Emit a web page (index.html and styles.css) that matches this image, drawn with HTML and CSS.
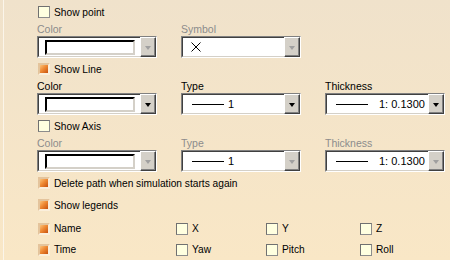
FILE: index.html
```html
<!DOCTYPE html>
<html>
<head>
<meta charset="utf-8">
<title>Simulation display options</title>
<link rel="stylesheet" href="styles.css">
</head>
<body>
<div class="panel">

	<div class="check top"><span class="box"></span>Show point</div>
	<div class="fields off">
		<div class="field">
			<div class="lbl">Color</div>
			<div class="combo"><div class="val"><span class="swatch"></span></div><span class="btn"></span></div>
		</div>
		<div class="field">
			<div class="lbl">Symbol</div>
			<div class="combo"><div class="val">
				<svg class="cross" width="10" height="10" viewBox="0 0 10 10"><path d="M0.5 0.5L9.5 9.5M9.5 0.5L0.5 9.5" stroke="#000" stroke-width="1"/></svg>
			</div><span class="btn"></span></div>
		</div>
	</div>

	<div class="check"><span class="box on"></span>Show Line</div>
	<div class="fields">
		<div class="field">
			<div class="lbl">Color</div>
			<div class="combo"><div class="val"><span class="swatch"></span></div><span class="btn"></span></div>
		</div>
		<div class="field">
			<div class="lbl">Type</div>
			<div class="combo"><div class="val"><span class="dash"></span>1</div><span class="btn"></span></div>
		</div>
		<div class="field">
			<div class="lbl">Thickness</div>
			<div class="combo"><div class="val"><span class="dash"></span><span class="num">1: 0.1300</span></div><span class="btn"></span></div>
		</div>
	</div>

	<div class="check"><span class="box"></span>Show Axis</div>
	<div class="fields off">
		<div class="field">
			<div class="lbl">Color</div>
			<div class="combo"><div class="val"><span class="swatch"></span></div><span class="btn"></span></div>
		</div>
		<div class="field">
			<div class="lbl">Type</div>
			<div class="combo"><div class="val"><span class="dash"></span>1</div><span class="btn"></span></div>
		</div>
		<div class="field">
			<div class="lbl">Thickness</div>
			<div class="combo"><div class="val"><span class="dash"></span><span class="num">1: 0.1300</span></div><span class="btn"></span></div>
		</div>
	</div>

	<div class="check del"><span class="box on"></span>Delete path when simulation starts again</div>
	<div class="check leg"><span class="box on"></span>Show legends</div>

	<div class="legends">
		<div class="check"><span class="box on"></span>Name</div>
		<div class="check"><span class="box"></span>X</div>
		<div class="check"><span class="box"></span>Y</div>
		<div class="check"><span class="box"></span>Z</div>
		<div class="check"><span class="box on"></span>Time</div>
		<div class="check"><span class="box"></span>Yaw</div>
		<div class="check"><span class="box"></span>Pitch</div>
		<div class="check"><span class="box"></span>Roll</div>
	</div>

</div>
</body>
</html>
```

FILE: styles.css
```css
* {
	margin: 0;
	padding: 0;
	box-sizing: border-box;
}

html, body {
	height: 100%;
}

body {
	background: linear-gradient(#f0e2cb, #f9e7c6);
	font-family: "Liberation Sans", Arial, sans-serif;
	font-size: 10.2px;
	color: #000;
	padding-left: 3px;
}

.panel {
	height: 100%;
	border-left: 1px solid #fbf5ea;
	padding: 4px 0 0 33px;
}

/* check boxes */
.check {
	display: flex;
	align-items: center;
	height: 16px;
	margin-top: 3px;
	white-space: nowrap;
}

.check.top {
	margin-top: 0;
}

.box {
	width: 12px;
	height: 12px;
	margin: 0 4px 0 1px;
	flex: none;
	background: #ffffe0;
	border: 1px solid #707070;
	border-right-color: #8c8c8c;
	border-bottom-color: #8c8c8c;
}

.box.on {
	border: 2px solid;
	border-color: #e4c49c #fbefdc #fbefdc #e4c49c;
	background: linear-gradient(135deg, #fbc47c 0%, #ef8a34 45%, #c8520e 100%);
}

.del {
	margin-top: 3px;
}

.leg {
	margin-top: 6px;
}

/* label + combo rows */
.fields {
	display: grid;
	grid-template-columns: 144px 144px 120px;
	margin-top: 2px;
}

.lbl {
	height: 14px;
	line-height: 14px;
	font-size: 10.5px;
}

.off .lbl {
	color: #8c8c8c;
}

.combo {
	display: flex;
	width: 120px;
	height: 22px;
	border: 1px solid;
	border-color: #808080 #ffffff #ffffff #808080;
	background: #fff;
}

.combo .val {
	flex: 1;
	display: flex;
	align-items: center;
	padding-left: 7px;
	border: 1px solid;
	border-color: #404040 #d4d0c8 #d4d0c8 #404040;
	border-right: none;
	min-width: 0;
	font-size: 11px;
}

.combo .btn {
	width: 16px;
	position: relative;
	background: #d4d0c8;
	border: 1px solid;
	border-color: #ffffff #404040 #404040 #ffffff;
	box-shadow: inset -1px -1px 0 #808080;
}

.combo .btn::after {
	content: "";
	position: absolute;
	left: 4px;
	top: 8px;
	border-left: 3px solid transparent;
	border-right: 3px solid transparent;
	border-top: 4px solid #000;
}

.off .combo .btn::after {
	border-top-color: #a0a0a0;
}

.swatch {
	width: 90px;
	height: 15px;
	border: 2px solid;
	border-color: #000 #d4d0c8 #d4d0c8 #000;
	background: #fff;
	margin-left: -1px;
}

.cross {
	display: block;
	margin-left: 1px;
}

.dash {
	width: 32px;
	height: 1px;
	background: #000;
	margin: 0 4px 0 2px;
}

.num {
	margin-left: 7px;
}

/* legend grid */
.legends {
	display: grid;
	grid-template-columns: 138px 90px 94px 60px;
	margin-top: 5px;
}

.legends .check {
	margin-top: 0;
	height: 21px;
}
```
